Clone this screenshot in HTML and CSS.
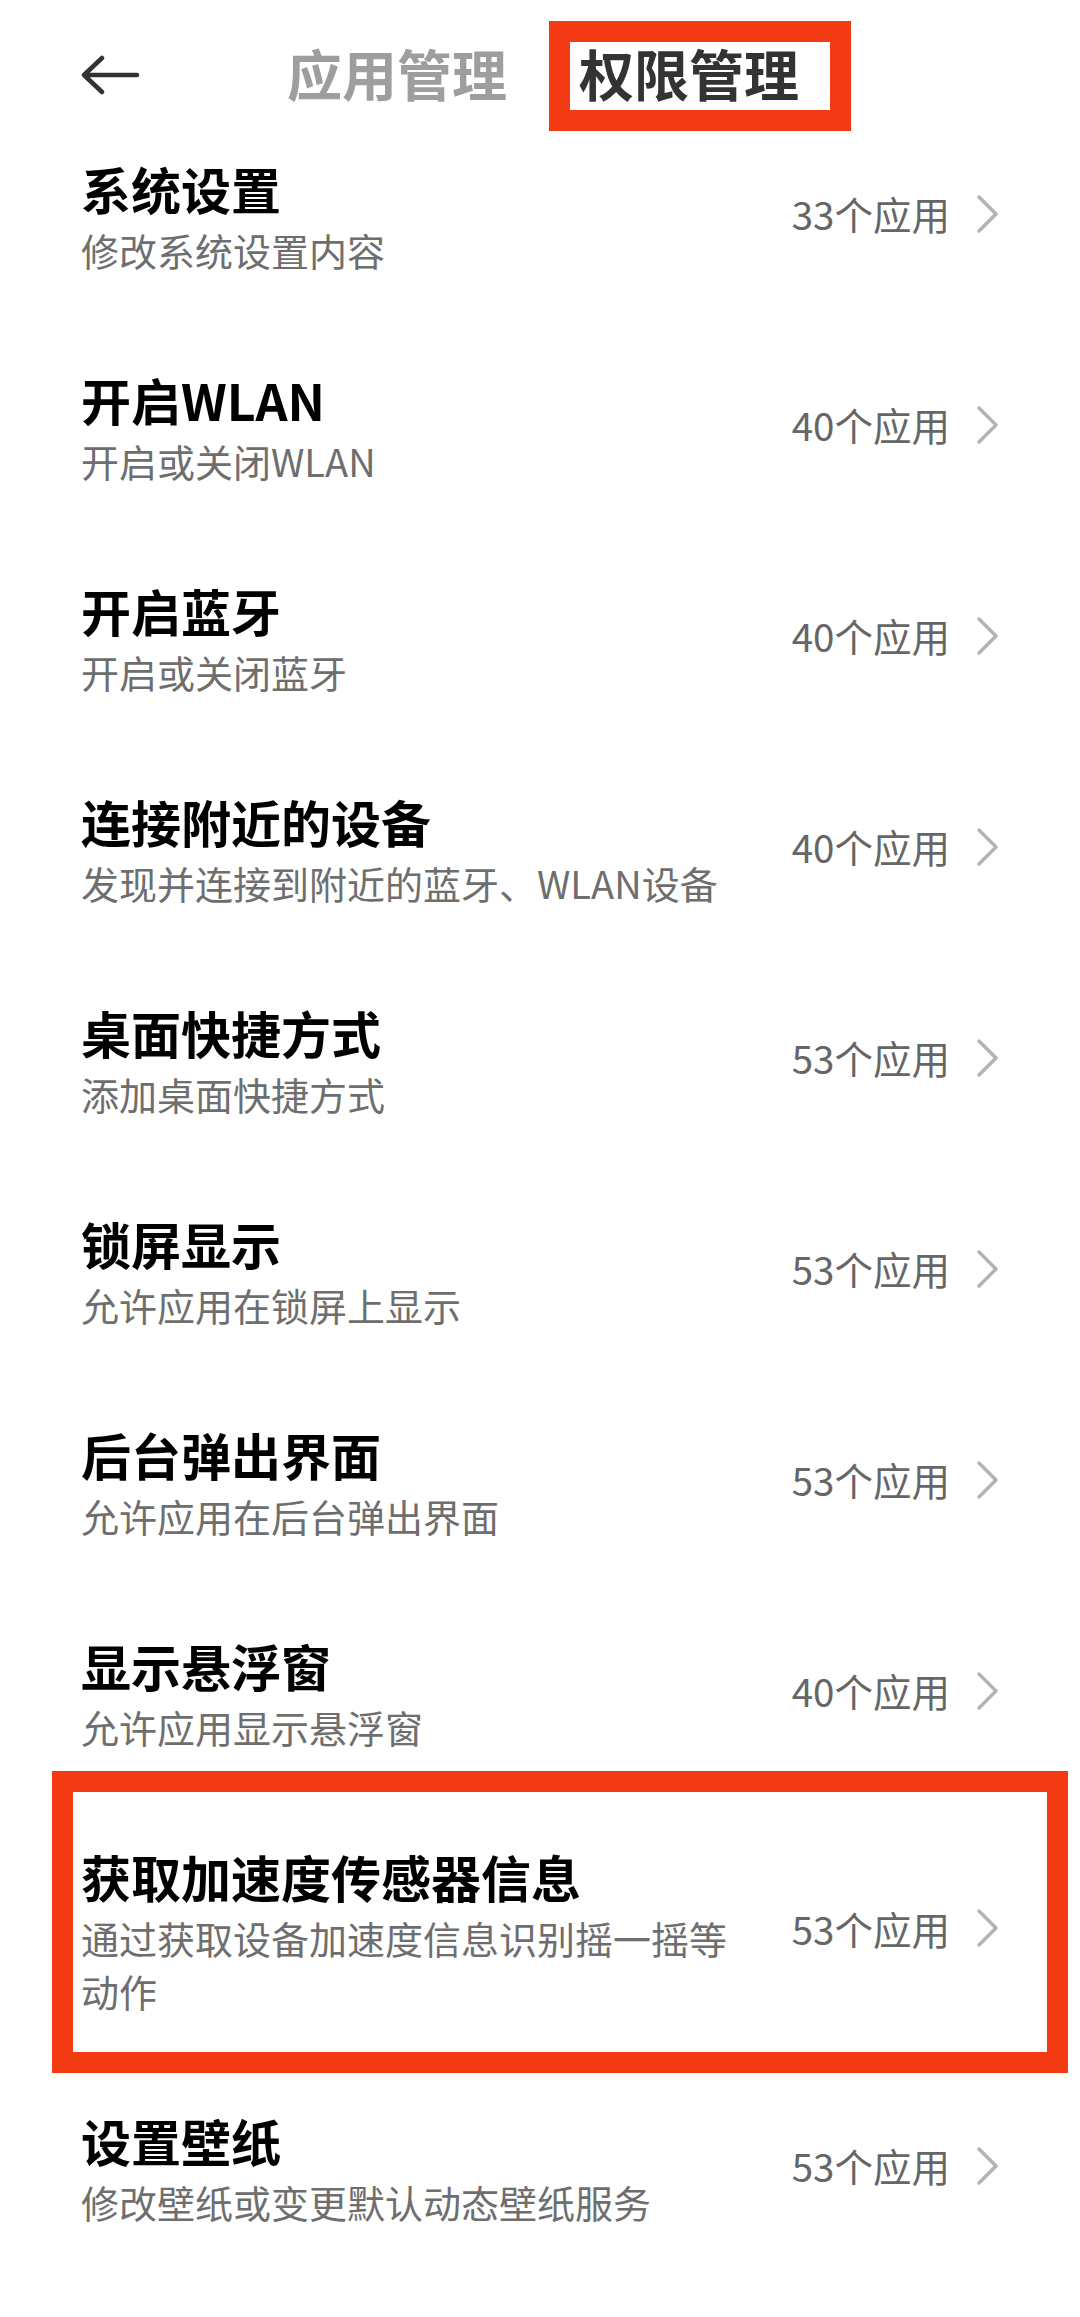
FILE: index.html
```html
<!DOCTYPE html>
<html lang="zh-CN">
<head>
<meta charset="utf-8">
<title>权限管理</title>
<link rel="stylesheet" href="styles.css">
</head>
<body>
<div class="page">
  <header class="header">
    <div class="back">
      <svg width="60" height="42" viewBox="0 0 60 42">
        <path d="M21 4 L3 21 L21 38 M3 21 H56" fill="none" stroke="#333" stroke-width="4.5" stroke-linecap="round" stroke-linejoin="round"/>
      </svg>
    </div>
    <div class="tab">应用管理</div>
    <div class="tab tab-active">权限管理</div>
  </header>
  <main class="list">
    <div class="row">
      <div class="text"><div class="title">系统设置</div><div class="sub">修改系统设置内容</div></div>
      <div class="right"><span class="count">33个应用</span><svg class="chev" width="24" height="40" viewBox="0 0 24 40"><path d="M3 3 L20 20 L3 37" fill="none" stroke="#b3b3b3" stroke-width="3.5" stroke-linecap="round" stroke-linejoin="round"/></svg></div>
    </div>
    <div class="row">
      <div class="text"><div class="title">开启WLAN</div><div class="sub">开启或关闭WLAN</div></div>
      <div class="right"><span class="count">40个应用</span><svg class="chev" width="24" height="40" viewBox="0 0 24 40"><path d="M3 3 L20 20 L3 37" fill="none" stroke="#b3b3b3" stroke-width="3.5" stroke-linecap="round" stroke-linejoin="round"/></svg></div>
    </div>
    <div class="row">
      <div class="text"><div class="title">开启蓝牙</div><div class="sub">开启或关闭蓝牙</div></div>
      <div class="right"><span class="count">40个应用</span><svg class="chev" width="24" height="40" viewBox="0 0 24 40"><path d="M3 3 L20 20 L3 37" fill="none" stroke="#b3b3b3" stroke-width="3.5" stroke-linecap="round" stroke-linejoin="round"/></svg></div>
    </div>
    <div class="row">
      <div class="text"><div class="title">连接附近的设备</div><div class="sub">发现并连接到附近的蓝牙、WLAN设备</div></div>
      <div class="right"><span class="count">40个应用</span><svg class="chev" width="24" height="40" viewBox="0 0 24 40"><path d="M3 3 L20 20 L3 37" fill="none" stroke="#b3b3b3" stroke-width="3.5" stroke-linecap="round" stroke-linejoin="round"/></svg></div>
    </div>
    <div class="row">
      <div class="text"><div class="title">桌面快捷方式</div><div class="sub">添加桌面快捷方式</div></div>
      <div class="right"><span class="count">53个应用</span><svg class="chev" width="24" height="40" viewBox="0 0 24 40"><path d="M3 3 L20 20 L3 37" fill="none" stroke="#b3b3b3" stroke-width="3.5" stroke-linecap="round" stroke-linejoin="round"/></svg></div>
    </div>
    <div class="row">
      <div class="text"><div class="title">锁屏显示</div><div class="sub">允许应用在锁屏上显示</div></div>
      <div class="right"><span class="count">53个应用</span><svg class="chev" width="24" height="40" viewBox="0 0 24 40"><path d="M3 3 L20 20 L3 37" fill="none" stroke="#b3b3b3" stroke-width="3.5" stroke-linecap="round" stroke-linejoin="round"/></svg></div>
    </div>
    <div class="row">
      <div class="text"><div class="title">后台弹出界面</div><div class="sub">允许应用在后台弹出界面</div></div>
      <div class="right"><span class="count">53个应用</span><svg class="chev" width="24" height="40" viewBox="0 0 24 40"><path d="M3 3 L20 20 L3 37" fill="none" stroke="#b3b3b3" stroke-width="3.5" stroke-linecap="round" stroke-linejoin="round"/></svg></div>
    </div>
    <div class="row">
      <div class="text"><div class="title">显示悬浮窗</div><div class="sub">允许应用显示悬浮窗</div></div>
      <div class="right"><span class="count">40个应用</span><svg class="chev" width="24" height="40" viewBox="0 0 24 40"><path d="M3 3 L20 20 L3 37" fill="none" stroke="#b3b3b3" stroke-width="3.5" stroke-linecap="round" stroke-linejoin="round"/></svg></div>
    </div>
    <div class="row row-marked">
      <div class="text"><div class="title">获取加速度传感器信息</div><div class="sub">通过获取设备加速度信息识别摇一摇等动作</div></div>
      <div class="right"><span class="count">53个应用</span><svg class="chev" width="24" height="40" viewBox="0 0 24 40"><path d="M3 3 L20 20 L3 37" fill="none" stroke="#b3b3b3" stroke-width="3.5" stroke-linecap="round" stroke-linejoin="round"/></svg></div>
    </div>
    <div class="row">
      <div class="text"><div class="title">设置壁纸</div><div class="sub">修改壁纸或变更默认动态壁纸服务</div></div>
      <div class="right"><span class="count">53个应用</span><svg class="chev" width="24" height="40" viewBox="0 0 24 40"><path d="M3 3 L20 20 L3 37" fill="none" stroke="#b3b3b3" stroke-width="3.5" stroke-linecap="round" stroke-linejoin="round"/></svg></div>
    </div>
  </main>
</div>
</body>
</html>
```

FILE: styles.css
```css
* { box-sizing: border-box; }
html, body { margin: 0; padding: 0; background: #ffffff; }
body {
  font-family: "Noto Sans CJK SC", "Noto Sans", sans-serif;
  width: 1080px;
  height: 2317px;
  overflow: hidden;
}
.page { width: 1080px; }

.header {
  height: 115px;
  display: flex;
  align-items: flex-start;
  padding: 21px 0 0 81px;
  overflow: visible;
  position: relative;
  z-index: 2;
}
.back {
  width: 60px;
  height: 42px;
  margin-top: 33px;
  display: flex;
}
.tab {
  font-size: 55px;
  line-height: 60px;
  padding-bottom: 8px;
  font-weight: 700;
  color: #9e9e9e;
  margin-top: 21px;
  margin-left: 146px;
}
.tab-active {
  color: #333333;
  margin-top: 0;
  margin-left: 42px;
  border: 21px solid #f23a14;
  padding: 0 31px 8px 9px;
  background: #fff;
}

.list { display: flex; flex-direction: column; }
.row {
  min-height: 211px;
  display: flex;
  align-items: center;
  padding: 0 80px 0 81px;
  position: relative;
}
.text {
  flex: 1;
  min-width: 0;
  padding-right: 50px;
  padding-bottom: 10px;
}
.title {
  font-size: 50px;
  line-height: 66px;
  font-weight: 700;
  color: #000000;
}
.sub {
  font-size: 38px;
  line-height: 53px;
  color: #6e6e6e;
  margin-top: 2px;
}
.right {
  display: flex;
  align-items: center;
  flex-shrink: 0;
  margin-top: -14px;
}
.count {
  font-size: 38.5px;
  line-height: 53px;
  color: #666666;
}
.chev { margin-left: 26px; display: block; }

.row-marked { min-height: 264px; }
.row-marked::after {
  content: "";
  position: absolute;
  left: 52px;
  right: 12px;
  top: -32px;
  bottom: -6px;
  border: 21px solid #f23a14;
  pointer-events: none;
}
```
